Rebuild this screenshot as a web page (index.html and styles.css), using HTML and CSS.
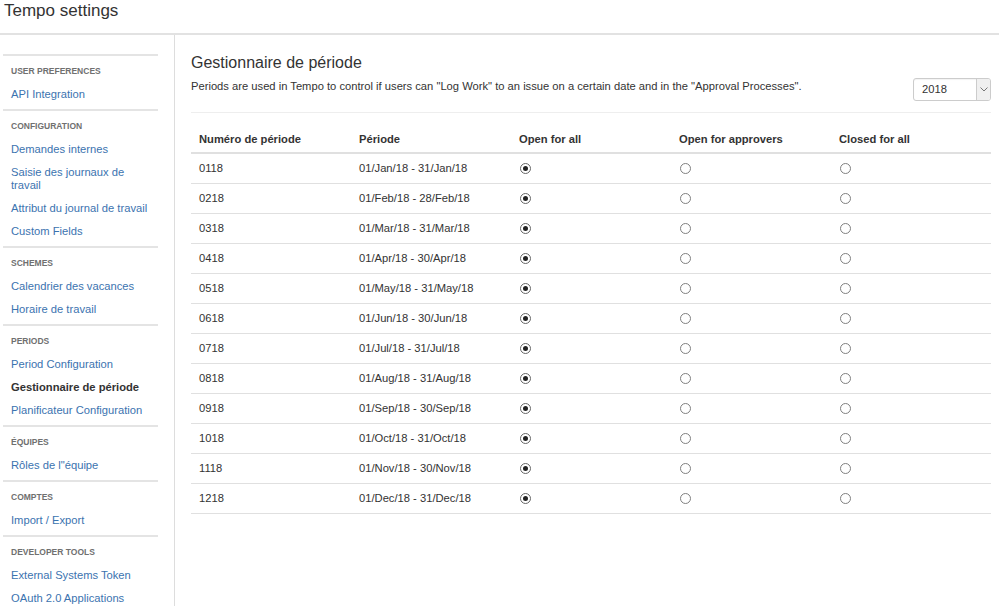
FILE: index.html
```html
<!DOCTYPE html>
<html lang="fr">
<head>
<meta charset="utf-8">
<title>Tempo settings</title>
<link rel="stylesheet" href="styles.css">
</head>
<body>
<header class="page-header"><h1 class="page-title">Tempo settings</h1></header>
<div class="layout">
  <nav class="sidebar">
    <section class="nav-section">
      <h2 class="nav-heading">User preferences</h2>
      <a class="nav-link" href="#">API Integration</a>
    </section>
    <section class="nav-section">
      <h2 class="nav-heading">Configuration</h2>
      <a class="nav-link" href="#">Demandes internes</a>
      <a class="nav-link" href="#">Saisie des journaux de travail</a>
      <a class="nav-link" href="#">Attribut du journal de travail</a>
      <a class="nav-link" href="#">Custom Fields</a>
    </section>
    <section class="nav-section">
      <h2 class="nav-heading">Schemes</h2>
      <a class="nav-link" href="#">Calendrier des vacances</a>
      <a class="nav-link" href="#">Horaire de travail</a>
    </section>
    <section class="nav-section">
      <h2 class="nav-heading">Periods</h2>
      <a class="nav-link" href="#">Period Configuration</a>
      <a class="nav-link active" href="#">Gestionnaire de période</a>
      <a class="nav-link" href="#">Planificateur Configuration</a>
    </section>
    <section class="nav-section">
      <h2 class="nav-heading">Équipes</h2>
      <a class="nav-link" href="#">Rôles de l"équipe</a>
    </section>
    <section class="nav-section">
      <h2 class="nav-heading">Comptes</h2>
      <a class="nav-link" href="#">Import / Export</a>
    </section>
    <section class="nav-section">
      <h2 class="nav-heading">Developer tools</h2>
      <a class="nav-link" href="#">External Systems Token</a>
      <a class="nav-link" href="#">OAuth 2.0 Applications</a>
    </section>
  </nav>
  <main class="content">
    <h2 class="content-title">Gestionnaire de période</h2>
    <div class="intro">
      <p class="description">Periods are used in Tempo to control if users can "Log Work" to an issue on a certain date and in the "Approval Processes".</p>
      <div class="select">
        <span class="select-value">2018</span>
        <span class="select-arrow"><svg width="8" height="5" viewBox="0 0 8 5"><path d="M0.5 0.5 L4 4 L7.5 0.5" fill="none" stroke="#777" stroke-width="1"/></svg></span>
      </div>
    </div>
    <table class="periods">
      <thead>
        <tr><th>Numéro de période</th><th>Période</th><th>Open for all</th><th>Open for approvers</th><th>Closed for all</th></tr>
      </thead>
      <tbody>
        <tr><td>0118</td><td>01/Jan/18 - 31/Jan/18</td><td><span class="radio checked"></span></td><td><span class="radio"></span></td><td><span class="radio"></span></td></tr>
        <tr><td>0218</td><td>01/Feb/18 - 28/Feb/18</td><td><span class="radio checked"></span></td><td><span class="radio"></span></td><td><span class="radio"></span></td></tr>
        <tr><td>0318</td><td>01/Mar/18 - 31/Mar/18</td><td><span class="radio checked"></span></td><td><span class="radio"></span></td><td><span class="radio"></span></td></tr>
        <tr><td>0418</td><td>01/Apr/18 - 30/Apr/18</td><td><span class="radio checked"></span></td><td><span class="radio"></span></td><td><span class="radio"></span></td></tr>
        <tr><td>0518</td><td>01/May/18 - 31/May/18</td><td><span class="radio checked"></span></td><td><span class="radio"></span></td><td><span class="radio"></span></td></tr>
        <tr><td>0618</td><td>01/Jun/18 - 30/Jun/18</td><td><span class="radio checked"></span></td><td><span class="radio"></span></td><td><span class="radio"></span></td></tr>
        <tr><td>0718</td><td>01/Jul/18 - 31/Jul/18</td><td><span class="radio checked"></span></td><td><span class="radio"></span></td><td><span class="radio"></span></td></tr>
        <tr><td>0818</td><td>01/Aug/18 - 31/Aug/18</td><td><span class="radio checked"></span></td><td><span class="radio"></span></td><td><span class="radio"></span></td></tr>
        <tr><td>0918</td><td>01/Sep/18 - 30/Sep/18</td><td><span class="radio checked"></span></td><td><span class="radio"></span></td><td><span class="radio"></span></td></tr>
        <tr><td>1018</td><td>01/Oct/18 - 31/Oct/18</td><td><span class="radio checked"></span></td><td><span class="radio"></span></td><td><span class="radio"></span></td></tr>
        <tr><td>1118</td><td>01/Nov/18 - 30/Nov/18</td><td><span class="radio checked"></span></td><td><span class="radio"></span></td><td><span class="radio"></span></td></tr>
        <tr><td>1218</td><td>01/Dec/18 - 31/Dec/18</td><td><span class="radio checked"></span></td><td><span class="radio"></span></td><td><span class="radio"></span></td></tr>
      </tbody>
    </table>
  </main>
</div>
</body>
</html>
```
FILE: styles.css
```css
* { box-sizing: border-box; }
html, body { margin: 0; padding: 0; height: 100%; }
body {
  font-family: "Liberation Sans", Arial, sans-serif;
  color: #333;
  background: #fff;
  font-size: 11.2px;
  overflow: hidden;
}
.page-header {
  height: 35px;
  border-bottom: 2px solid #e2e2e2;
  padding: 1px 0 0 4px;
}
.page-title {
  margin: 0;
  font-size: 17px;
  font-weight: normal;
  line-height: 20px;
  color: #333;
}
.layout {
  display: flex;
  height: calc(100% - 35px);
}
.sidebar {
  width: 175px;
  flex: none;
  border-right: 1px solid #ddd;
  padding: 19px 16px 0 3px;
}
.nav-section {
  border-top: 2px solid #e4e4e4;
  padding: 4px 0 3px 8px;
}
.nav-heading {
  margin: 0;
  font-size: 8.5px;
  font-weight: bold;
  text-transform: uppercase;
  color: #707070;
  line-height: 23px;
}
.nav-link {
  display: block;
  font-size: 11.2px;
  line-height: 13px;
  padding: 5px 6px 5px 0;
  color: #3b73af;
  text-decoration: none;
}
.nav-link.active {
  color: #333;
  font-weight: bold;
}
.content {
  flex: 1;
  padding: 18px 9px 0 16px;
}
.content-title {
  margin: 0;
  font-size: 16px;
  font-weight: normal;
  line-height: 20px;
  color: #333;
}
.intro {
  display: flex;
  justify-content: space-between;
  align-items: flex-start;
  margin-top: 5px;
  padding-bottom: 11px;
  border-bottom: 1px solid #eee;
}
.description {
  margin: 0;
  font-size: 11.2px;
  line-height: 16px;
}
.select {
  width: 78px;
  height: 23px;
  border: 1px solid #ccc;
  border-radius: 3px;
  display: flex;
  align-items: stretch;
  overflow: hidden;
  box-shadow: inset 0 1px 1px rgba(0,0,0,0.05);
}
.select-value {
  flex: 1;
  padding-left: 8px;
  line-height: 21px;
  font-size: 11.2px;
  color: #333;
}
.select-arrow {
  width: 14px;
  background: #f0f0f0;
  border-left: 1px solid #ccc;
  display: flex;
  align-items: center;
  justify-content: center;
}
.periods {
  width: 800px;
  margin-top: 11px;
  border-collapse: collapse;
  table-layout: fixed;
}
.periods th {
  text-align: left;
  font-size: 11.2px;
  font-weight: bold;
  color: #333;
  line-height: 13px;
  padding: 9px 8px 6px;
  border-bottom: 2px solid #e0e0e0;
}
.periods td {
  height: 30px;
  padding: 0 8px;
  font-size: 11.2px;
  color: #333;
  border-bottom: 1px solid #e0e0e0;
  vertical-align: middle;
}
.radio {
  display: block;
  width: 11px;
  height: 11px;
  margin-left: 1px;
  border: 1px solid #808080;
  border-radius: 50%;
  background: #fff;
  position: relative;
}
.radio.checked {
  border-color: #666;
}
.radio.checked::after {
  content: "";
  position: absolute;
  left: 2px;
  top: 2px;
  width: 5px;
  height: 5px;
  border-radius: 50%;
  background: #222;
}
```
